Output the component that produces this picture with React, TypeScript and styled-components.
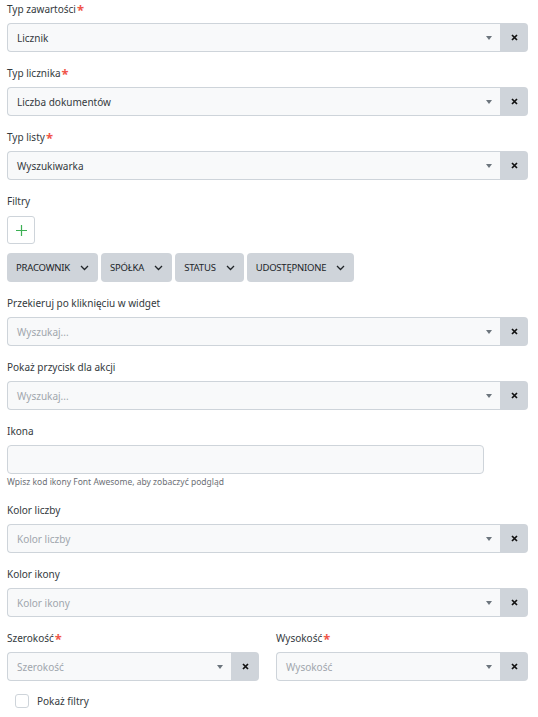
import React from "react";
import styled, { createGlobalStyle } from "styled-components";

const GlobalStyle = createGlobalStyle`
  body {
    margin: 0;
    background: #ffffff;
    font-family: "Noto Sans", "Open Sans", Arial, sans-serif;
    color: #343a40;
  }
`;

const colors = {
  text: "#343a40",
  placeholder: "#a0a6ad",
  border: "#ced4da",
  inputBg: "#f8f9fa",
  button: "#cfd4da",
  caret: "#6c757d",
  required: "#f0564a",
  green: "#3cb054",
};

const Form = styled.div`
  display: flex;
  flex-direction: column;
  padding: 1px 10px 0 7px;
`;

const Field = styled.div<{ $gap?: number }>`
  display: flex;
  flex-direction: column;
  margin-bottom: ${(p) => (p.$gap ?? 13)}px;
`;

const Label = styled.label`
  font-size: 10px;
  line-height: 16px;
  margin-bottom: 6px;
  color: ${colors.text};
  display: flex;
  align-items: center;
`;

const Required = styled.span`
  color: ${colors.required};
  font-size: 13px;
  font-weight: bold;
  line-height: 10px;
  margin-left: 1px;
  margin-top: 2px;
`;

const SelectRow = styled.div`
  display: flex;
  height: 29px;
`;

const SelectBox = styled.div<{ $empty?: boolean }>`
  flex: 1;
  display: flex;
  align-items: center;
  justify-content: space-between;
  background: ${colors.inputBg};
  border: 1px solid ${colors.border};
  border-right: none;
  border-radius: 4px 0 0 4px;
  padding: 0 8px 0 9px;
  font-size: 10px;
  color: ${(p) => (p.$empty ? colors.placeholder : colors.text)};
`;

const Caret = styled.span`
  width: 0;
  height: 0;
  border-left: 3.5px solid transparent;
  border-right: 3.5px solid transparent;
  border-top: 4px solid ${colors.caret};
`;

const ClearButton = styled.button`
  width: 28px;
  flex-shrink: 0;
  border: none;
  background: ${colors.button};
  border-radius: 0 4px 4px 0;
  display: flex;
  align-items: center;
  justify-content: center;
  padding: 0;
`;

const TextInput = styled.div`
  height: 29px;
  width: 477px;
  box-sizing: border-box;
  background: ${colors.inputBg};
  border: 1px solid ${colors.border};
  border-radius: 4px;
`;

const Help = styled.div`
  font-size: 8.5px;
  line-height: 12px;
  color: #6c6f75;
  margin-top: 2px;
  margin-bottom: 1px;
`;

const AddButton = styled.button`
  width: 28px;
  height: 28px;
  box-sizing: border-box;
  background: #fff;
  border: 1px solid ${colors.border};
  border-radius: 3px;
  display: flex;
  align-items: center;
  justify-content: center;
  padding: 0;
  margin-top: 1px;
  margin-bottom: 9px;
`;

const Chips = styled.div`
  display: flex;
  gap: 3px;
`;

const Chip = styled.button`
  height: 29px;
  display: flex;
  align-items: center;
  gap: 10px;
  padding: 0 9px;
  border: none;
  border-radius: 4px;
  background: ${colors.button};
  font-family: inherit;
  font-size: 9.5px;
  letter-spacing: -0.2px;
  color: #212529;
  text-transform: uppercase;
`;

const Columns = styled.div`
  display: grid;
  grid-template-columns: 252px 252px;
  column-gap: 17px;
`;

const CheckRow = styled.label`
  display: flex;
  align-items: center;
  gap: 8px;
  padding-left: 8px;
  font-size: 10px;
  color: ${colors.text};
`;

const Check = styled.span`
  width: 12px;
  height: 12px;
  border: 1px solid ${colors.border};
  border-radius: 3px;
  background: #fff;
`;

const CrossIcon = () => (
  <svg width="7" height="7" viewBox="0 0 7 7">
    <path d="M1 1 L6 6 M6 1 L1 6" stroke="#111" strokeWidth="1.7" />
  </svg>
);

const Chevron = () => (
  <svg width="9" height="6" viewBox="0 0 9 6">
    <path d="M1 1 L4.5 4.5 L8 1" stroke="#212529" strokeWidth="1.3" fill="none" />
  </svg>
);

interface SelectProps {
  label: string;
  value?: string;
  placeholder?: string;
  required?: boolean;
  gap?: number;
}

const SelectField: React.FC<SelectProps> = ({ label, value, placeholder, required, gap }) => (
  <Field $gap={gap}>
    <Label>
      {label}
      {required && <Required>*</Required>}
    </Label>
    <SelectRow>
      <SelectBox $empty={!value}>
        <span>{value ?? placeholder}</span>
        <Caret />
      </SelectBox>
      <ClearButton>
        <CrossIcon />
      </ClearButton>
    </SelectRow>
  </Field>
);

const filters = ["Pracownik", "Spółka", "Status", "Udostępnione"];

export default function App() {
  return (
    <>
      <GlobalStyle />
      <Form>
        <SelectField label="Typ zawartości" value="Licznik" required />
        <SelectField label="Typ licznika" value="Liczba dokumentów" required />
        <SelectField label="Typ listy" value="Wyszukiwarka" required />

        <Field>
          <Label>Filtry</Label>
          <AddButton>
            <svg width="11" height="11" viewBox="0 0 11 11">
              <path d="M5.5 0 V11 M0 5.5 H11" stroke={colors.green} strokeWidth="1.2" />
            </svg>
          </AddButton>
          <Chips>
            {filters.map((f) => (
              <Chip key={f}>
                {f}
                <Chevron />
              </Chip>
            ))}
          </Chips>
        </Field>

        <SelectField label="Przekieruj po kliknięciu w widget" placeholder="Wyszukaj..." />
        <SelectField label="Pokaż przycisk dla akcji" placeholder="Wyszukaj..." />

        <Field>
          <Label>Ikona</Label>
          <TextInput />
          <Help>Wpisz kod ikony Font Awesome, aby zobaczyć podgląd</Help>
        </Field>

        <SelectField label="Kolor liczby" placeholder="Kolor liczby" />
        <SelectField label="Kolor ikony" placeholder="Kolor ikony" />

        <Columns>
          <SelectField label="Szerokość" placeholder="Szerokość" required />
          <SelectField label="Wysokość" placeholder="Wysokość" required />
        </Columns>

        <CheckRow>
          <Check />
          Pokaż filtry
        </CheckRow>
      </Form>
    </>
  );
}
